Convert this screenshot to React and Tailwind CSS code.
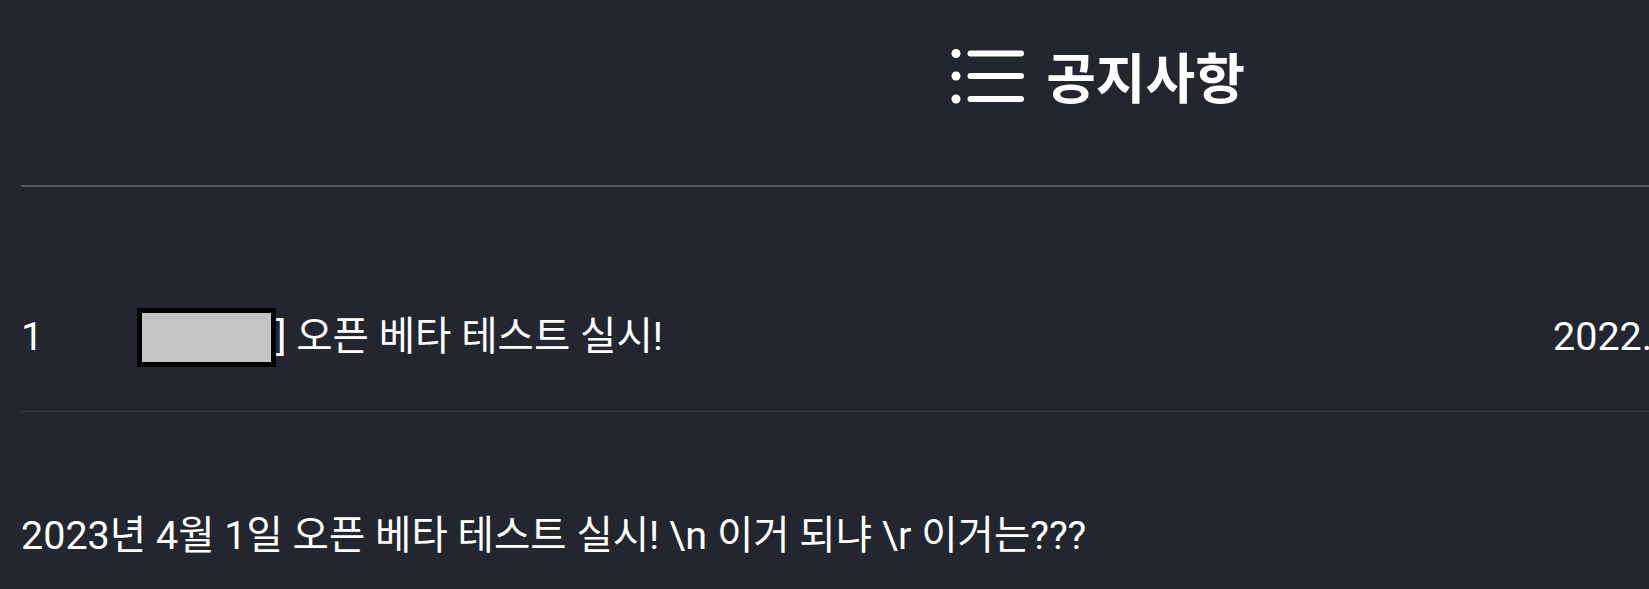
import React from "react";

function ListIcon() {
  return (
    <svg width="73" height="58" viewBox="0 0 73 58" fill="none">
      <circle cx="5" cy="6.5" r="4.5" fill="#fff" />
      <circle cx="5" cy="29" r="4.5" fill="#fff" />
      <circle cx="5" cy="52" r="4.5" fill="#fff" />
      <g stroke="#fff" strokeWidth="6" strokeLinecap="round">
        <line x1="19.5" y1="6.5" x2="70" y2="6.5" />
        <line x1="19.5" y1="29" x2="70" y2="29" />
        <line x1="19.5" y1="52" x2="70" y2="52" />
      </g>
    </svg>
  );
}

export default function App() {
  return (
    <div
      className="w-screen h-screen overflow-hidden bg-[#23262e] text-white"
      style={{ fontFamily: 'Roboto, "Noto Sans CJK KR", sans-serif' }}
    >
      <div className="w-[2196px] px-[21px]">
        <div className="h-[187px] pb-[33px] flex items-center justify-center gap-[22px] border-b-2 border-[#54565b]">
          <ListIcon />
          <h1 className="text-[54px] font-bold leading-none" style={{ fontFamily: '"Noto Sans CJK KR", sans-serif' }}>공지사항</h1>
        </div>
        <div className="grid grid-cols-[116px_1416px_1fr] pt-[120px] pb-[44px] border-b border-[#3a3c43] text-[39.5px] leading-[60px] items-center">
          <div>1</div>
          <div className="flex items-center">
            <span className="inline-block w-[139px] h-[59px] border-[5px] border-black bg-[#c4c4c4]"></span>
            <span className="whitespace-pre">] 오픈 베타 테스트 실시!</span>
          </div>
          <div>2022.04.01</div>
        </div>
        <div className="pt-[94px] text-[39.5px] leading-[60px] whitespace-pre">
          2023년 4월 1일 오픈 베타 테스트 실시! \n 이거 되냐 \r 이거는???
        </div>
      </div>
    </div>
  );
}
